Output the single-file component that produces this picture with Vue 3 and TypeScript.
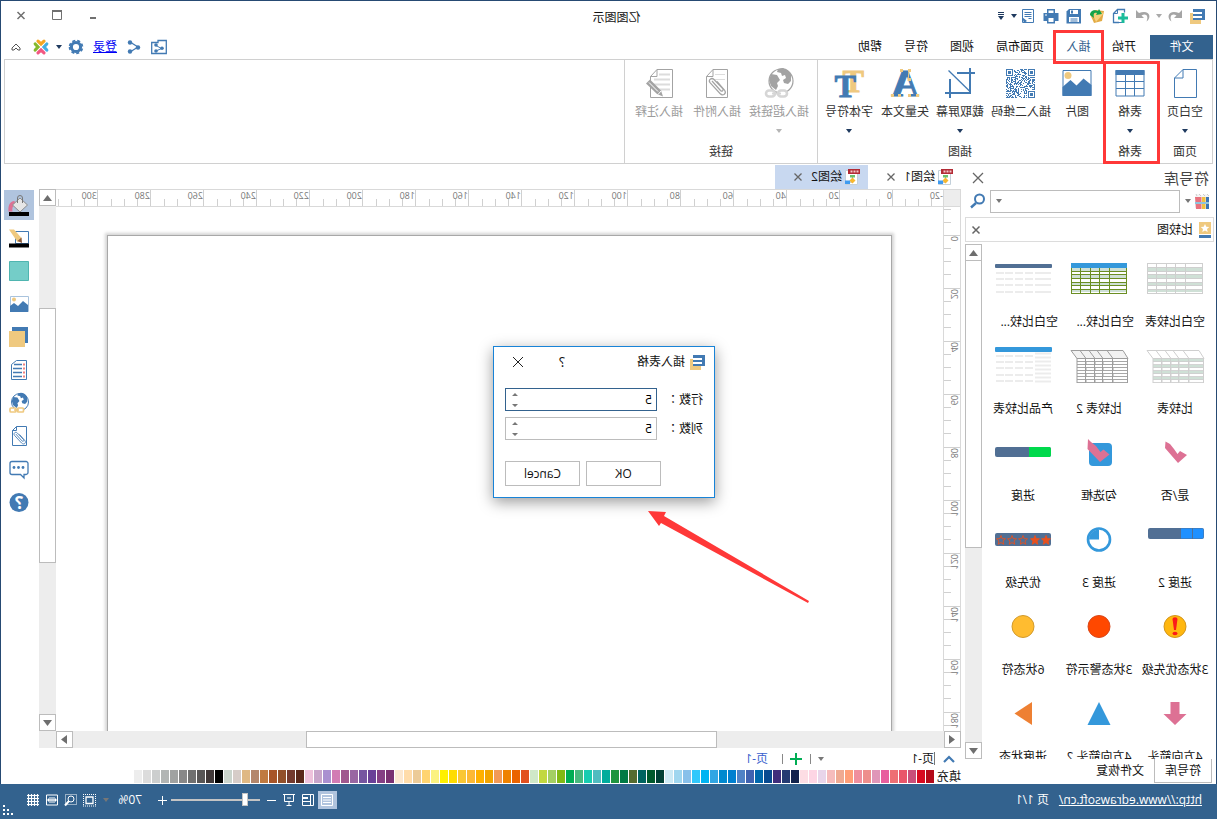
<script setup lang="ts">
import { ref } from 'vue'

const B = '#427ab3'
const O = '#efc97f'

const caret = '<path d="M0 0h6L3 4z"/>'

const art: Record<string, string> = {
  logo: `<path d="M5 12h8V5h3v11H5z" fill="${O}"/><path d="M1 1h12v3H4v2h9v2H4v2h9v2H1z" fill="${B}"/>`,
  undo: '<path d="M1 2v8h8L6.500 7.500C11 5 14 8 11.500 13.500 17.500 9 14 1 4 5z" fill="#a5a5a5"/>',
  redo: '<path d="M15 2v8H7l2.500-2.500C5 5 2 8 4.500 13.500-1.500 9 2 1 12 5z" fill="#a5a5a5"/>',
  add: `<path d="M7 14.500h7.500v-9l-4-4H5.500v4" fill="none" transform="translate(16 0) scale(-1 1)"/><path d="M9 14.500h5.500v-9l-4-4h-7v3" fill="none" stroke="${B}" stroke-width="1.300"/><path d="M10.500 1.500v4h4" fill="none" stroke="${B}"/><path d="M9.500 14.500H4" stroke="${B}"/>`,
  open: '<path d="M1 3l9-1 5 4-4 9-8-2z" fill="#e2ab45"/><path d="M1 5l9-2 3 2-4 9z" fill="#f8d07c"/><path d="M15 7c0-4-4-6-8-4L6 1 3 6l6 1-1-2c3-1 4 1 3 5z" fill="#16a34a"/>',
  save: `<path d="M1 1h12l2.500 2.500V15.500H1z" fill="${B}"/><path d="M4 2h8v4H4zM3 9h10v5H3z" fill="#fff"/><path d="M9 2.500h2v3H9zM4.500 10.500h7v1h-7zM4.500 12.500h7v1h-7z" fill="${B}"/>`,
  print: `<path d="M4 1h8v4h3.500v8H12v2.500H4V13H.5V5H4z" fill="${B}"/><path d="M5.500 2.500h5V5h-5zM5.500 10h5v4h-5z" fill="#fff"/><path d="M12 6.500h2v1h-2z" fill="#fff"/>`,
  preview: `<path d="M2.500 1.500h11v13h-11z" fill="none" stroke="${B}"/><path d="M4.500 4.500h7M4.500 6.500h7M4.500 8.500h7M4.500 10.500h3" stroke="${B}"/><path d="M14 9l-5 4 3 2z" fill="${B}"/>`,
  sharebox: `<path d="M.7 1.500v13h14.600v-11H9v-2z" fill="none" stroke="${B}" stroke-width="1.300"/><path d="M11 6.500L5.500 9.500 11 12" fill="none" stroke="${B}"/><g fill="${B}"><circle cx="11" cy="6" r="1.800"/><circle cx="5" cy="9.300" r="1.800"/><circle cx="11" cy="12" r="1.800"/></g>`,
  share: `<path d="M12 3L4 8l8 5" fill="none" stroke="${B}" stroke-width="1.300"/><g fill="${B}"><circle cx="12" cy="3.500" r="2.200"/><circle cx="4" cy="8.500" r="2.200"/><circle cx="12" cy="12.500" r="2.200"/></g>`,
  gear: `<circle cx="8" cy="8" r="4.600" fill="none" stroke="${B}" stroke-width="3"/><circle cx="8" cy="8" r="6.400" fill="none" stroke="${B}" stroke-width="1.800" stroke-dasharray="3 2.030"/>`,
  cross: '<g fill="none" stroke-width="3.200" stroke-linecap="round"><path d="M5 2.200L8 5l3-2.800" stroke="#f5a623"/><path d="M5 13.800L8 11l3 2.800" stroke="#f25882"/><path d="M2.200 5L5 8l-2.800 3" stroke="#45aee2"/><path d="M13.800 5L11 8l2.800 3" stroke="#84b92c"/></g><path d="M5.500 5.500l5 5M10.500 5.500l-5 5" stroke="#fff"/>',
  books: '<path d="M1 3l3-2 4 1 4-1 3 2v12H1z" fill="#f4f4f4"/><path d="M1 4h3v12H1z" fill="#3b74b4"/><path d="M4.500 4H8v12H4.500z" fill="#efc040"/><path d="M8.500 4H15l-1 12H8.500z" fill="#e8727e"/><path d="M1 3l2-2M5 3l2-2M9 3l2-2M13 3l1-2" stroke="#ccc"/><path d="M1 9h14v2H1z" fill="#8fc4dc"/>',
  search: `<circle cx="6.500" cy="6" r="4.500" fill="none" stroke="${B}" stroke-width="2"/><path d="M10 10l5 4.500" stroke="${B}" stroke-width="2.400"/>`,
  star: `<path d="M2 0h12v12H2z" fill="${O}"/><path d="M2 13h12v3H2z" fill="${B}"/><path d="M8 2l1.300 2.800 3 .3-2.300 2 .7 3L8 8.500 5.300 10l.7-3-2.300-2 3-.3z" fill="#fff"/>`,
  doc: '<path d="M2.500 1.500h12v14h-12z" fill="#fff" stroke="#c3d0da"/><path d="M0 0h12v5H0z" fill="#b22b35"/><path d="M1.500 2.500h9" stroke="#f2c8cb" stroke-width="2" stroke-dasharray="2 1"/><path d="M7.500 6v8M7.500 13h5" stroke="#999" fill="none"/><path d="M5 6h5v2.500H5z" fill="#6cc06c"/><path d="M7.500 8.500l3 3-3 3-3-3z" fill="#f8b82e"/><path d="M10 11.500h5V15h-5z" fill="#3f9bf0"/>',
}
art.add += '<path d="M3.500 6h3v3.500H10v3H6.500V16h-3v-3.500H0v-3h3.500z" fill="#1bbc9b" transform="translate(0 -1)"/>'

interface Tool { label: string; icon: string; size: number; drop?: boolean; off?: boolean }
interface Group { title: string; hot?: boolean; line?: boolean; tools: Tool[] }

function qr(): string {
  const n = 29
  let seed = 77
  let d = ''
  const corner = (x: number, y: number) => (x < 8 && y < 8) || (x > 20 && y < 8) || (x < 8 && y > 20)
  for (let y = 0; y < n; y++) {
    for (let x = 0; x < n; x++) {
      seed = (seed * 1103515245 + 12345) % 2147483648
      if (!corner(x, y) && seed / 2147483648 > 0.48) d += `M${x} ${y}h1v1h-1z`
    }
  }
  for (const [x, y] of [[0, 0], [22, 0], [0, 22]]) {
    d += `M${x} ${y}h7v7h-7zM${x + 1} ${y + 1}v5h5v-5zM${x + 2} ${y + 2}h3v3h-3z`
  }
  return `<path transform="translate(2 2)" d="${d}" fill="${B}"/>`
}

const clip = (c: string) =>
  `<path d="M21 14l-8.500 9.500c-1.500 1.500-3.500-.2-2.200-1.800L19 12.500c2.500-2.500 6 .5 4 3.200L13 26.500c-3 3-7 0-4.500-3.500L16 14.500" fill="none" stroke="${c}" stroke-width="1.200"/>`

const continents = (c: string) =>
  `<path d="M4 7c2-4 6-6 9-6l4 1 1 3-4 1-1 3-3-1-1 3 3 2-1 3-4 1-3-3zM18 8l6-1 2 6-2 6-5 4-2-4 1-3-3-3z" fill="${c}"/>`

const big: Record<string, string> = {
  page: `<path d="M4.500 2.500H18L26.500 11v19.500h-22zM18 2.500V11h8.500" fill="none" stroke="${B}"/>`,
  table: `<path d="M2 3.500h28v25.500H2z" fill="#fff" stroke="${B}"/><path d="M1.500 3h29v5h-29z" fill="${B}"/><path d="M2 14.500h28M2 21.500h28M11.500 8v21M20.500 8v21" stroke="${B}"/>`,
  image: `<path d="M2 3.500h28v25H2z" fill="none" stroke="${B}"/><circle cx="25" cy="8.500" r="3.500" fill="${O}"/><path d="M1.500 18l8-6.500 7 7 6-5.500 8 7v9h-29z" fill="${B}"/>`,
  qr: qr(),
  crop: `<path d="M27.500 3.500L6 24.500" stroke="${B}" stroke-width="1.300"/><path d="M26 12v19M31 26H5M19 6H1M6 1v25" stroke="${B}" stroke-width="2" fill="none"/>`,
  vector: `<text x="16" y="29" text-anchor="middle" font-family="Liberation Serif" font-weight="700" font-size="38" fill="${B}" stroke="${B}">A</text><path d="M12 4l1 10" stroke="${O}" fill="none"/><g fill="${O}"><path d="M10 2h3v3h-3zM18 2h3v3h-3zM10 11h3v3h-3zM2 27h3v3H2zM10 27h3v3h-3zM20 27h3v3h-3zM27 27h3v3h-3z"/></g>`,
  fonts: `<g font-family="Liberation Serif" font-weight="700" font-size="32"><text x="1" y="25" fill="${O}" stroke="${O}">T</text><text x="9" y="30" fill="${B}" stroke="${B}">T</text></g>`,
  link: `<circle cx="14" cy="14" r="12" fill="#fff" stroke="#a3a3a3" stroke-width="1.200"/>${continents('#a3a3a3')}<g fill="#fff" stroke="#d6d6d6" stroke-width="2.600"><rect x="8" y="23.500" width="9" height="6" rx="3"/><rect x="20" y="23.500" width="9" height="6" rx="3"/></g><path d="M14 26.500h9" stroke="#d6d6d6" stroke-width="2"/>`,
  attach: `<path d="M5.500 2.500H20l6.500 7v21h-21zM20 2.500v7h6.500" fill="#fff" stroke="#a3a3a3"/><path d="M8 7.500h10M8 12.500h16" stroke="#ddd"/>${clip('#a3a3a3')}`,
  note: `<path d="M2.500 2.500H18l6.500 7v21h-22zM18 2.500v7h6.500" fill="#fff" stroke="#a3a3a3"/><path d="M5 7.500h11M5 12.500h16M5 17.500h16M5 22.500h12" stroke="#dcdcdc" stroke-width="2"/><path d="M12 29.500l2-6L25 12.500l4 4-11 10.500z" fill="#a3a3a3"/><path d="M17 24.500l9-9M14 24l3 3.500" stroke="#fff"/>`,
}

const groups: Group[] = [
  { title: '页面', tools: [{ label: '空白页', icon: 'page', size: 54, drop: true }] },
  { title: '表格', hot: true, tools: [{ label: '表格', icon: 'table', size: 56, drop: true }] },
  {
    title: '插图', line: true, tools: [
      { label: '图片', icon: 'image', size: 50 },
      { label: '插入二维码', icon: 'qr', size: 62 },
      { label: '截取屏幕', icon: 'crop', size: 60, drop: true },
      { label: '矢量文本', icon: 'vector', size: 50 },
      { label: '字体符号', icon: 'fonts', size: 62, drop: true },
    ],
  },
  {
    title: '链接', line: true, tools: [
      { label: '插入超链接', icon: 'link', size: 76, drop: true, off: true },
      { label: '插入附件', icon: 'attach', size: 48, off: true },
      { label: '插入注释', icon: 'note', size: 68, off: true },
    ],
  },
]

const starPath = (x: number, fill: string) =>
  `<path transform="translate(${x} 22)" d="M0-4.500l1.200 3.100 3.300.2L2 1l.8 3.300L0 2.500l-2.800 1.800L-2 1l-2.500-2.200 3.300-.2z" fill="${fill}" stroke="#e8501e" stroke-width=".9"/>`

function sheet(line: string, fill: string, head: string): string {
  const top = head ? 10 : 6
  let s = `<path d="M2 6h56v31H2z" fill="#fff"/>`
  for (let i = 0; i < 4; i++) s += `<path d="M2 ${11 + i * 7}h56v3H2z" fill="${fill}"/>`
  for (const y of [6, 10, 14, 17, 21, 25, 28, 32, 36]) if (y >= top) s += `<path d="M2 ${y + 0.5}h56" stroke="${line}"/>`
  s += `<path d="M2.500 6v31M19.500 6v31M29.500 6v31M38.500 6v31M48.500 6v31M57.500 6v31" stroke="${line}"/>`
  return head ? s + `<path d="M2 6h56v5H2z" fill="${head}"/>` : s
}

function slanted(line: string, head: string, stripe: string): string {
  let s = `<path d="M6 6.500h52l-6 8H1z" fill="${head}" stroke="${line}"/>`
  for (const x of [16, 26, 34, 43]) s += `<path d="M${x} 14.500l6-8M${x} 14v24" stroke="${line}" fill="none"/>`
  for (let i = 0; i < 4; i++) s += `<path d="M1 ${15 + i * 6}h51v3H1z" fill="${stripe}"/>`
  for (let i = 0; i < 9; i++) s += `<path d="M1 ${14.5 + i * 3}h51" stroke="${line}" stroke-width=".9"/>`
  return s + `<path d="M1.500 14v25M16.500 14v25M26.500 14v25M34.500 14v25M43.500 14v25M52 14v25" stroke="${line}"/>`
}

function dashes(ys: number[], head: string, y: number, h: number, dense: boolean): string {
  let s = `<rect x="1" y="${y}" width="57" height="${h}" rx="1" fill="${head}"/>`
  for (const r of ys) s += `<path d="M20 ${r}h8M30 ${r}h8M40 ${r}h8M49 ${r}h8${dense ? '' : `M2 ${r}h16`}" stroke="#ececec" stroke-width="2"/>`
  if (dense) for (let i = 0; i < 8; i++) s += `<path d="M2 ${9.5 + i * 4}h16" stroke="#ececec" stroke-width="2"/>`
  return s
}

const symbols: { name: string; svg: string; cut?: boolean }[] = [
  { name: '空白比较表', svg: sheet('#cfcfcf', '#cfe0d6', '') },
  { name: '空白比较...', svg: sheet('#6b8e23', '#cfe0d6', '#3498db'), cut: true },
  { name: '空白比较...', svg: dashes([16, 22, 28, 35], '#516f94', 7, 4, false), cut: true },
  { name: '比较表', svg: slanted('#cfcfcf', '#fff', '#cfe0d6') },
  { name: '比较表 2', svg: slanted('#9d9d9d', '#f2f2f2', '#fff') },
  { name: '产品比较表', svg: dashes([12, 18, 24, 31, 37], '#3498db', 3, 5, true) },
  { name: '是/否', svg: '<path d="M39.500 10.500L35 13l-4 5-3.500 5-2.500-3-7 4 9 8 13-15z" fill="#dd7194"/>' },
  { name: '勾选框', svg: '<rect x="17" y="12" width="23" height="23" rx="4" fill="#3498db"/><path d="M41 8l-3 3-5 4-4.500 6-3-2.500-6 5L29 31l12.500-13z" fill="#dd7194"/>' },
  { name: '进度', svg: '<rect x="2" y="16" width="56" height="10" rx="2" fill="#516f94"/><path d="M3 16h21v10H3l-1-2v-6z" fill="#00d94c"/>' },
  { name: '进度 2', svg: '<rect x="1" y="10" width="56" height="11" rx="2" fill="#516f94"/><path d="M2 10.500h22v10H2l-.5-2v-6z" fill="#1e90ff"/><path d="M12.500 10v11" stroke="#516f94"/>' },
  { name: '进度 3', svg: '<circle cx="30" cy="21.500" r="11" fill="#fff" stroke="#3498db" stroke-width="2.600"/><path d="M30 21.500v-10a10 10 0 0 1 10 10z" fill="#3498db"/>' },
  { name: '优先级', svg: '<rect x="2" y="15" width="56" height="13" rx="2" fill="#516f94"/>' + starPath(7, '#e8501e') + starPath(18, '#e8501e') + starPath(30, 'none') + starPath(41, 'none') + starPath(52, 'none') },
  { name: '3状态优先级', svg: '<circle cx="30" cy="21.500" r="11" fill="#ffb70f" stroke="#d2951d"/><path d="M27.500 14a2.500 1.800 0 0 1 5 0L31 25h-2z" fill="#fb1a1a"/><ellipse cx="30" cy="28.500" rx="2.500" ry="1.700" fill="#fb1a1a"/>' },
  { name: '3状态警示符', svg: '<circle cx="30" cy="21.500" r="11" fill="#ff4800" stroke="#d9471a"/>' },
  { name: '6状态符', svg: '<circle cx="30" cy="21.500" r="11" fill="#ffbc30" stroke="#d19a2c"/>' },
  { name: '4方向箭头', svg: '<path d="M25.500 10h9v12h7L30 33 18.500 22h7z" fill="#dd7194"/>' },
  { name: '4方向箭头 2', svg: '<path d="M30 10l11.500 23h-23z" fill="#3498db"/>' },
  { name: '进度状态', svg: '<path d="M38.500 21.500L21 10v23z" fill="#ee8033"/>' },
]

const rail: { name: string; svg: string }[] = [
  { name: '填充', svg: '<path d="M21.500 17.500c.5-6-1-10-6-10.500l-1 4c3 1 3.500 3 3 6.500z" fill="#dd7194"/><path d="M10 4l7.500 7L10 18l-7.500-7z" fill="#e6e6e6" stroke="#8c8c8c"/><path d="M7.500 9V4a2.500 2.500 0 0 1 5 0v5" fill="none" stroke="#777"/><path d="M1 18h20v4H1z"/>' },
  { name: '线条', svg: `<path d="M1.500 4.500h13v12h-13z" fill="#fff" stroke="${B}"/><path d="M21 2.500h-5L8.500 11l1 3 3 1z" fill="${O}"/><path d="M8.500 10.500L8 16l4.500-2z" fill="#8b5a3c"/><path d="M1 16.500h20v4H1z"/>` },
  { name: '主题', svg: '<path d="M1.500 1.500h19v19h-19z" fill="#74cdc8" stroke="#4fb5b0"/>' },
  { name: '图片', svg: `<path d="M1.500 3.500h18v15h-18z" fill="#fff" stroke="#a9c3dd"/><circle cx="16" cy="6.500" r="2" fill="${O}"/><path d="M2 12l5-4 5 5 4-3 4 3v6H2z" fill="${B}"/>` },
  { name: '图层', svg: `<path d="M2 1h16v16H2z" fill="${B}"/><path d="M5 5h16v16H5z" fill="${O}"/>` },
  { name: '页面', svg: `<path d="M3.500 1.500h10l5 4v15h-15z" fill="#fff" stroke="${B}"/><path d="M8 5.500h8M8 9.500h9M8 13.500h9M8 17.500h9" stroke="${B}" stroke-width="1.700"/><path d="M5 5.500h2M5 9.500h2M5 13.500h2M5 17.500h2" stroke="#f08080" stroke-width="2"/>` },
  { name: '超链接', svg: `<circle cx="10" cy="10" r="8.500" fill="#fff" stroke="${B}"/><g transform="scale(.7)">${continents(B)}</g><g fill="#fff" stroke="${O}" stroke-width="1.700"><rect x="6.500" y="16" width="6" height="4" rx="1"/><rect x="14" y="16" width="6" height="4" rx="1"/></g><path d="M11 18h5" stroke="${O}" stroke-width="1.500"/>` },
  { name: '附件', svg: `<path d="M3.500 1.500h10l4 4v15h-14zM13.500 1.500v4h4" fill="#fff" stroke="${B}"/><g transform="translate(-1 -1) scale(.72)">${clip(B)}</g>` },
  { name: '注释', svg: `<path d="M4 3.500h14a2 2 0 0 1 2 2v9a2 2 0 0 1-2 2H9.500L6 20v-3.500H4a2 2 0 0 1-2-2v-9a2 2 0 0 1 2-2z" fill="#fff" stroke="${B}" stroke-width="1.300"/><g fill="${B}"><circle cx="7" cy="9.500" r="1.400"/><circle cx="11.500" cy="9.500" r="1.400"/><circle cx="16" cy="9.500" r="1.400"/></g>` },
  { name: '帮助', svg: `<circle cx="11" cy="11.500" r="9.500" fill="${B}"/><text x="11" y="17.500" text-anchor="middle" font-family="Open Sans" font-weight="700" font-size="17" fill="#fff">?</text>` },
]

const swatches = (
  'b40a19 d80a20 c94f7a e9556a ee6f74 e85f9e e096b8 ee8e8c f08f9e ff9f78 efaa92 f6bcbc e8d5ea fdd5e4 fddde4 ' +
  '12234c 253a72 402d7c 084a90 0068ac 4062b0 5082c6 0080d0 0089cf 30a6e4 00b4f2 30c8fc 88c0ea 9fd6ef cdeaf5 ' +
  '004035 00592c 006460 556b2f 007a44 20953f 00ac9c 50bcc0 18ccb0 48b97e 00ad54 82b914 a4cf62 c2d83f cfe8c8 ' +
  'e25020 eb6400 ef8200 f29a56 f2a400 ffb000 fdb935 fac734 ffdc00 fff000 fbf280 ffd470 eccb98 ffdcaa fce8d0 ' +
  '7a3172 853f84 6a4098 7655a0 9966a2 a0588e d27cb4 aa90d0 c8a5ca eec2dc ' +
  '5a281a 743a2e 92502a a85528 c07a40 b4876c dfb884 d6ccc8 cad4cc ' +
  '000000 403838 585656 707070 888888 a0a2a1 b2b5b4 cccece dcdcdc ededed'
).split(' ').map(c => '#' + c)

const hMarks = Array.from({ length: 16 }, (_, i) => i * 20)
const vMarks = Array.from({ length: 10 }, (_, i) => i * 20)

const menus = ['页面布局', '视图', '符号', '帮助']
const quick = ['add', 'open', 'save', 'print', 'preview']

const rows = ref(5)
const cols = ref(5)
const zoom = ref(15)
</script>

<template>
  <div class="window">
    <header class="titlebar">
      <div class="quick">
        <svg class="i16" viewBox="0 0 16 16" v-html="art.logo" />
        <button class="ib" aria-label="撤销"><svg class="i16" viewBox="0 0 16 16" v-html="art.undo" /></button>
        <svg class="caret pale" viewBox="0 0 6 4" v-html="caret" />
        <button class="ib" aria-label="重做"><svg class="i16" viewBox="0 0 16 16" v-html="art.redo" /></button>
        <button v-for="q in quick" :key="q" class="ib" :aria-label="q"><svg class="i16" viewBox="0 0 16 16" v-html="art[q]" /></button>
        <svg class="caret" viewBox="0 0 6 4" v-html="caret" />
        <svg class="more" viewBox="0 0 6 8"><path d="M0 0h6v1H0zM0 2h6v1H0zM0 4h6L3 8z" /></svg>
      </div>
      <h1 class="title">亿图图示</h1>
      <div class="winctl">
        <button class="ib" aria-label="最小化"><svg viewBox="0 0 12 12"><path d="M3 7h6v2H3z" fill="#707070" /></svg></button>
        <button class="ib" aria-label="最大化"><svg viewBox="0 0 12 12"><path d="M1.500 1.500h9v8h-9z" fill="none" stroke="#707070" /><path d="M1 0h10v2H1z" fill="#707070" /></svg></button>
        <button class="ib" aria-label="关闭"><svg viewBox="0 0 12 12"><path d="M2.500 2l7 7M9.500 2l-7 7" stroke="#707070" stroke-width="1.500" /></svg></button>
      </div>
    </header>

    <nav class="menubar">
      <button class="file">文件</button>
      <button class="menu start">开始</button>
      <button class="menu active">插入</button>
      <button v-for="m in menus" :key="m" class="menu">{{ m }}</button>
      <div class="account">
        <button class="ib" aria-label="共享文件夹"><svg class="i16" viewBox="0 0 16 16" v-html="art.sharebox" /></button>
        <button class="ib" aria-label="共享"><svg class="i16" viewBox="0 0 16 16" v-html="art.share" /></button>
        <a href="#" class="login">登录</a>
        <button class="ib" aria-label="设置"><svg class="i16" viewBox="0 0 16 16" v-html="art.gear" /></button>
        <svg class="caret" viewBox="0 0 6 4" v-html="caret" />
        <svg class="i16 cross" viewBox="0 0 16 16" v-html="art.cross" />
        <button class="ib" aria-label="折叠"><svg class="i12" viewBox="0 0 12 12"><path d="M2 7l4-4 4 4v2H8L6 7 4 9H2z" fill="none" stroke="#555" /></svg></button>
      </div>
    </nav>

    <section class="ribbon">
      <div v-for="g in groups" :key="g.title" class="group" :class="{ hot: g.hot, line: g.line }">
        <div class="tools">
          <button v-for="t in g.tools" :key="t.label" class="tool" :class="{ off: t.off }" :disabled="t.off" :style="{ width: t.size + 'px' }">
            <svg class="i32" viewBox="0 0 32 32" v-html="big[t.icon]" />
            <span>{{ t.label }}</span>
            <svg v-if="t.drop" class="caret" viewBox="0 0 6 4" v-html="caret" />
          </button>
        </div>
        <div class="gtitle">{{ g.title }}</div>
      </div>
    </section>

    <main class="main">
      <aside class="library">
        <div class="libhead">
          <h2>符号库</h2>
          <button class="ib" aria-label="关闭"><svg class="i12" viewBox="0 0 12 12"><path d="M1 1l10 10M11 1L1 11" stroke="#666" stroke-width="1.300" /></svg></button>
        </div>
        <div class="searchrow">
          <svg class="i16" viewBox="0 0 16 16" v-html="art.books" />
          <svg class="caret gray" viewBox="0 0 6 4" v-html="caret" />
          <div class="combo">
            <input type="text" aria-label="搜索">
            <svg class="caret gray" viewBox="0 0 6 4" v-html="caret" />
          </div>
          <button class="ib" aria-label="查找"><svg class="i16" viewBox="0 0 16 16" v-html="art.search" /></button>
        </div>
        <div class="cat">
          <svg class="i16" viewBox="0 0 16 16" v-html="art.star" />
          <span>比较图</span>
          <button class="ib" aria-label="关闭比较图"><svg class="i12" viewBox="0 0 12 12"><path d="M2.500 2.500l7 7M9.500 2.500l-7 7" stroke="#666" stroke-width="1.500" /></svg></button>
        </div>
        <div class="shelf">
          <div class="symbols">
            <figure v-for="(s, i) in symbols" :key="i">
              <svg viewBox="0 0 60 44" v-html="s.svg" />
              <figcaption :class="{ cut: s.cut }">{{ s.name }}</figcaption>
            </figure>
          </div>
          <div class="vbar">
            <button class="sb" aria-label="向上"><svg viewBox="0 0 9 6"><path d="M0 6h9L4.500 0z" /></svg></button>
            <div class="thumb lib" />
            <button class="sb end" aria-label="向下"><svg viewBox="0 0 9 6"><path d="M0 0h9L4.500 6z" /></svg></button>
          </div>
        </div>
        <div class="libtabs">
          <button class="on">符号库</button>
          <button>文件恢复</button>
        </div>
      </aside>

      <section class="center">
        <div class="doctabs">
          <div v-for="n in 2" :key="n" class="doctab" :class="{ on: n === 2 }">
            <svg class="i16" viewBox="0 0 16 16" v-html="art.doc" />
            <span>绘图{{ n }}</span>
            <button class="ib" aria-label="关闭"><svg class="i12" viewBox="0 0 12 12"><path d="M2.500 2.500l7 7M9.500 2.500l-7 7" stroke="#666" stroke-width="1.300" /></svg></button>
          </div>
        </div>
        <div class="work">
          <div class="cornerbox" />
          <div class="hruler">
            <span class="lead">-20</span>
            <span v-for="m in hMarks" :key="m" class="seg">{{ m }}</span>
          </div>
          <div class="vruler">
            <span class="lead" />
            <span v-for="m in vMarks" :key="m" class="seg"><span class="turned">{{ m }}</span></span>
          </div>
          <div class="canvas"><div class="sheet" /></div>
          <div class="vbar right">
            <button class="sb" aria-label="向上"><svg viewBox="0 0 9 6"><path d="M0 6h9L4.500 0z" /></svg></button>
            <div class="thumb draw" />
            <button class="sb end" aria-label="向下"><svg viewBox="0 0 9 6"><path d="M0 0h9L4.500 6z" /></svg></button>
          </div>
          <div class="hbar">
            <button class="sb" aria-label="向左"><svg class="side" viewBox="0 0 6 9"><path d="M6 0v9L0 4.500z" /></svg></button>
            <div class="hthumb" />
            <button class="sb end" aria-label="向右"><svg class="side" viewBox="0 0 6 9"><path d="M0 0v9l6-4.500z" /></svg></button>
          </div>
          <div class="pit" />
        </div>
        <div class="pages">
          <svg class="up" viewBox="0 0 12 8"><path d="M1 7l5-5 5 5" fill="none" stroke="#427ab3" stroke-width="2.200" /></svg>
          <button class="pagename">页-1</button>
          <svg class="caret gray" viewBox="0 0 6 4" v-html="caret" />
          <i class="bar" />
          <button class="ib" aria-label="新建页"><svg class="i12" viewBox="0 0 12 12"><path d="M0 6h12M6 0v12" stroke="#00ad54" stroke-width="2" /></svg></button>
          <i class="bar" />
          <button class="pagetab">页-1</button>
        </div>
        <div class="fill">
          <span>填充</span>
          <i v-for="(c, i) in swatches" :key="i" :style="{ background: c }" />
        </div>
      </section>

      <div class="rail">
        <button v-for="(r, i) in rail" :key="r.name" :class="{ on: i === 0 }" :aria-label="r.name">
          <svg viewBox="0 0 22 22" v-html="r.svg" />
        </button>
      </div>
    </main>

    <footer class="status">
      <a href="http://www.edrawsoft.cn/">http://www.edrawsoft.cn/</a>
      <span class="count">页 1/1</span>
      <div class="views">
        <button class="vb on" aria-label="普通视图"><svg viewBox="0 0 12 12"><path d="M.5.500h11v11H.5zM2 3.500h8M2 6h8M2 8.500h8" /></svg></button>
        <button class="vb" aria-label="页面视图"><svg viewBox="0 0 12 12"><path d="M.5.500h11v11H.5zM3.500.500v11M6 4.500h5M6 3.500h5M3.500 7.500h8" /></svg></button>
        <button class="vb" aria-label="演示"><svg viewBox="0 0 12 12"><path d="M0 .500h12M1.500.500v7h9v-7M6 8v4M3.500 11.500h5M4 4h4" /></svg></button>
      </div>
      <button class="sign" aria-label="缩小"><svg viewBox="0 0 9 9"><path d="M0 4.500h9" /></svg></button>
      <input v-model="zoom" type="range" min="0" max="100" aria-label="缩放">
      <button class="sign" aria-label="放大"><svg viewBox="0 0 9 9"><path d="M0 4.500h9M4.500 0v9" /></svg></button>
      <span class="pct">70%</span>
      <svg class="caret gray" viewBox="0 0 6 4" v-html="caret" />
      <div class="fits">
        <button class="vb" aria-label="选区"><svg viewBox="0 0 12 12"><path d="M0 .500h13M0 12h13M.5 0v12M12.500 0v12" stroke-dasharray="1 1" /><path d="M3 3h7v6.500H3z" stroke-width="1.300" /></svg></button>
        <button class="vb" aria-label="放大选区"><svg viewBox="0 0 12 12"><path d="M.5.500h11v10H.5z" stroke-dasharray="1 1" /><circle cx="6" cy="5" r="3" /><path d="M8 7l4 4.500" stroke-width="2" /></svg></button>
        <button class="vb" aria-label="适合宽度"><svg viewBox="0 0 12 12"><path d="M.5 1h11v10H.5zM0 6h12M4 3v6M8 3v6M6 3v6M2.500 4.500v3M9.500 4.500v3" /></svg></button>
        <button class="vb" aria-label="网格"><svg viewBox="0 0 12 12"><path d="M1.500 0v12M4.500 0v12M7.500 0v12M10.500 0v12M0 1.500h12M0 4.500h12M0 7.500h12M0 10.500h12" stroke-width="1.200" /></svg></button>
      </div>
      <svg class="grip" viewBox="0 0 10 10"><path d="M8 0h2v2H8zM8 4h2v2H8zM4 4h2v2H4zM8 8h2v2H8zM4 8h2v2H4zM0 8h2v2H0z" fill="#fff" /></svg>
    </footer>

    <form class="dialog" role="dialog" aria-labelledby="dlg" @submit.prevent>
      <div class="dhead">
        <svg class="i16" viewBox="0 0 16 16" v-html="art.logo" />
        <span id="dlg">插入表格</span>
        <button type="button" class="ib help">?</button>
        <button type="button" class="ib" aria-label="关闭"><svg class="i12" viewBox="0 0 12 12"><path d="M1 1l10 10M11 1L1 11" stroke="#222" /></svg></button>
      </div>
      <div class="field">
        <label for="rows">行数<span class="colon">：</span></label>
        <div class="spin focus">
          <input id="rows" v-model="rows" type="number">
          <svg viewBox="0 0 6 14"><path d="M0 3h6L3 0zM0 11h6L3 14z" /></svg>
        </div>
      </div>
      <div class="field">
        <label for="cols">列数<span class="colon">：</span></label>
        <div class="spin">
          <input id="cols" v-model="cols" type="number">
          <svg viewBox="0 0 6 14"><path d="M0 3h6L3 0zM0 11h6L3 14z" /></svg>
        </div>
      </div>
      <div class="dbtns">
        <button type="submit">OK</button>
        <button type="button">Cancel</button>
      </div>
    </form>

    <svg class="arrow" viewBox="0 0 162 94"><path d="M161 1l-18 1 2 4L0 91l1 2L148 13l2 3z" fill="#ff3838" /></svg>
  </div>
</template>

<style>
body {
  margin: 0;
  overflow: hidden;
}
</style>

<style scoped>
.window {
  position: relative;
  display: flex;
  flex-direction: column;
  box-sizing: border-box;
  width: 100%;
  height: 100vh;
  border: 1px solid #264a73;
  border-bottom: 0;
  background: #fff;
  color: #111;
  font: 12px/16px 'Open Sans', 'Noto Sans CJK SC', sans-serif;
  transform: scaleX(-1);
}
.window * {
  box-sizing: border-box;
}
button {
  margin: 0;
  padding: 0;
  border: 0;
  background: none;
  color: inherit;
  font: inherit;
  white-space: nowrap;
}
input {
  margin: 0;
  font: inherit;
}
svg {
  display: block;
  flex: none;
  overflow: visible;
}
.ib {
  display: flex;
  align-items: center;
  justify-content: center;
  flex: none;
}
.i12 {
  width: 12px;
  height: 12px;
}
.i16 {
  width: 16px;
  height: 16px;
}
.i32 {
  width: 32px;
  height: 32px;
}
.caret {
  width: 6px;
  height: 4px;
  fill: #1f3a5f;
}
.gray {
  fill: #777;
}
.pale {
  fill: #aaa;
}

.titlebar {
  display: grid;
  grid-template-columns: 1fr auto 1fr;
  align-items: center;
  height: 34px;
  padding: 0 14px 4px 10px;
}
.quick {
  display: flex;
  align-items: center;
  gap: 7px;
}
.quick .pale {
  margin: 0 -2px;
}
.quick .caret:not(.pale) {
  margin-left: -4px;
}
.more {
  width: 6px;
  height: 8px;
  fill: #1f3a5f;
}
.title {
  margin: 0;
  padding: 4px 12px 0 0;
  font-size: 12px;
  font-weight: 400;
}
.winctl {
  display: flex;
  justify-content: flex-end;
  gap: 24px;
}
.winctl svg {
  width: 12px;
  height: 12px;
}

.menubar {
  display: flex;
  height: 24px;
  padding: 0 9px 0 3px;
}
.file {
  width: 63px;
  background: #33628e;
  color: #fff;
}
.menu {
  padding: 0 11px;
}
.menu.start {
  padding: 0 8px 0 14px;
}
.menu.active {
  position: relative;
  width: 51px;
  margin-right: -2px;
  color: #33628e;
}
.menu.active::after {
  content: '';
  position: absolute;
  inset: -5px 0;
  border: 3px solid #ff3838;
}
.account {
  display: flex;
  align-items: center;
  gap: 9px;
  margin-left: auto;
}
.account .caret {
  margin: 0 -2px 0 -3px;
}
.account .cross {
  margin-right: 2px;
}
.login {
  color: #0000f5;
  text-decoration: underline;
}

.ribbon {
  display: flex;
  height: 105px;
  margin: 0 3px;
  border: 1px solid #d0d0d0;
}
.group {
  position: relative;
  display: flex;
  flex-direction: column;
}
.group.line {
  border-right: 1px solid #d0d0d0;
}
.group.hot::after {
  content: '';
  position: absolute;
  inset: 1px 1px -1px -2px;
  border: 3px solid #ff3838;
}
.tools {
  display: flex;
}
.tool {
  display: flex;
  flex-direction: column;
  align-items: center;
  height: 84px;
  padding-top: 7px;
  color: #333;
}
.tool span {
  margin-top: 5px;
}
.tool .caret {
  margin-top: 9px;
}
.tool.off {
  color: #9b9b9b;
}
.tool.off .caret {
  fill: #b5b5b5;
}
.gtitle {
  text-align: center;
  color: #333;
}

.main {
  display: flex;
  flex: 1;
  min-height: 0;
}
.library {
  display: flex;
  flex-direction: column;
  flex: none;
  width: 255px;
  padding: 0 4px 0 2px;
}
.libhead {
  display: flex;
  align-items: center;
  justify-content: space-between;
  height: 25px;
  padding: 3px 7px 0 5px;
}
.libhead h2 {
  margin: 0;
  color: #444;
  font-size: 15px;
  font-weight: 400;
}
.searchrow {
  display: flex;
  align-items: center;
  gap: 3px;
  height: 24px;
  padding: 0 5px 0 4px;
}
.combo {
  display: flex;
  align-items: center;
  flex: 1;
  height: 23px;
  margin: 0 1px 0 2px;
  padding-right: 5px;
  border: 1px solid #bcbcbc;
}
.combo input {
  flex: 1;
  min-width: 0;
  border: 0;
  outline: 0;
  background: none;
}
.cat {
  display: flex;
  align-items: center;
  height: 25px;
  margin-top: 4px;
  padding: 0 4px 0 0;
  border: 1px solid #dcdcdc;
}
.cat span {
  flex: 1;
  padding-left: 4px;
}
.shelf {
  display: flex;
  flex: 1;
  min-height: 0;
  margin-top: 2px;
}
.symbols {
  display: grid;
  flex: 1;
  grid-template-columns: repeat(3, 76px);
  grid-auto-rows: 87px;
  overflow: hidden;
  padding-left: 1px;
}
.symbols figure {
  display: flex;
  flex-direction: column;
  align-items: center;
  margin: 0;
  padding-top: 13px;
  white-space: nowrap;
}
.symbols svg {
  width: 60px;
  height: 44px;
}
figcaption {
  margin-top: 13px;
}
figcaption.cut {
  width: 70px;
}
.vbar {
  display: flex;
  flex-direction: column;
  flex: none;
  width: 17px;
  background: #ededed;
}
.sb {
  display: flex;
  align-items: center;
  justify-content: center;
  flex: none;
  width: 17px;
  height: 17px;
  border: 1px solid #bcbcbc;
  background: #fff;
  fill: #6e6e6e;
}
.sb svg {
  width: 9px;
  height: 6px;
}
.sb svg.side {
  width: 6px;
  height: 9px;
}
.vbar .end {
  margin-top: auto;
}
.hbar .end {
  margin-left: auto;
}
.thumb,
.hthumb {
  border: 1px solid #bcbcbc;
  background: #fff;
}
.thumb.lib {
  height: 56%;
  margin-top: -1px;
}
.libtabs {
  display: flex;
  height: 25px;
  padding: 0 0 1px 2px;
}
.libtabs button {
  padding: 0 10px;
}
.libtabs .on {
  border: 1px solid #bcbcbc;
  border-top: 0;
}

.center {
  display: flex;
  flex-direction: column;
  flex: 1;
  min-width: 0;
}
.doctabs {
  display: flex;
  height: 25px;
  padding-top: 1px;
}
.doctab {
  display: flex;
  align-items: center;
  gap: 2px;
  width: 93px;
  padding-left: 8px;
}
.doctab .ib {
  margin-left: 5px;
}
.doctab.on {
  background: #c8d8f0;
}
.work {
  display: grid;
  flex: 1;
  grid-template-columns: 18px 1fr 17px;
  grid-template-rows: 18px 1fr 17px;
  min-height: 0;
}
.cornerbox {
  border: 1px solid #d9d9d9;
  background: #ededed;
}
.hruler,
.vruler {
  display: flex;
  overflow: hidden;
  color: #777;
  font-size: 9px;
  line-height: 12px;
}
.hruler {
  border-top: 1px solid #d9d9d9;
  border-bottom: 1px solid #d9d9d9;
}
.hruler .seg,
.hruler .lead {
  flex: none;
  background: repeating-linear-gradient(90deg, #d0d0d0 0 1px, transparent 1px 13px) 12px 100% / 39px 7px no-repeat;
}
.hruler .seg {
  width: 53px;
  border-left: 1px solid #d0d0d0;
}
.hruler .lead {
  width: 50px;
  background-position-x: 11px;
}
.vruler {
  grid-column: 1;
  flex-direction: column;
  border-left: 1px solid #d9d9d9;
  border-right: 1px solid #d9d9d9;
}
.vruler .seg,
.vruler .lead {
  flex: none;
  background: repeating-linear-gradient(180deg, #d0d0d0 0 1px, transparent 1px 13px) 100% 12px / 7px 39px no-repeat;
}
.vruler .seg {
  display: flex;
  align-items: flex-start;
  height: 53px;
  border-top: 1px solid #d0d0d0;
}
.turned {
  writing-mode: vertical-rl;
  transform: rotate(180deg);
}
.vruler .lead {
  height: 28px;
  background-position-y: 2px;
  background-size: 7px 26px;
}
.canvas {
  display: flex;
  overflow: hidden;
  padding: 28px 51px 0;
}
.sheet {
  flex: 1;
  border: 1px solid #a8a8a8;
  border-bottom: 0;
  box-shadow: 0 0 3px 2px #d4d4d4;
}
.vbar.right {
  grid-column: 3;
  grid-row: 1 / 3;
}
.thumb.draw {
  height: 47%;
  margin-top: 102px;
}
.hbar {
  display: flex;
  grid-column: 1 / 3;
  background: #ededed;
}
.hthumb {
  width: 411px;
  margin-left: 227px;
}
.pit {
  background: #ededed;
}
.pages {
  display: flex;
  align-items: center;
  height: 21px;
  padding-left: 6px;
}
.up {
  width: 12px;
  height: 8px;
}
.pagename {
  width: 111px;
  margin-left: 8px;
  border-left: 1px solid #777;
  line-height: 13px;
  text-align: left;
}
.bar {
  width: 1px;
  height: 10px;
  margin: 0 8px 0 7px;
  background: #888;
}
.pagetab {
  margin-left: 6px;
  color: #3a5fcd;
}
.fill {
  display: flex;
  gap: 1px;
  height: 15px;
  padding-bottom: 1px;
}
.fill span {
  width: 26px;
}
.fill i {
  width: 8px;
  margin-top: 1px;
}

.rail {
  display: flex;
  flex-direction: column;
  flex: none;
  gap: 3px;
  padding: 26px 3px 0 5px;
}
.rail button {
  display: grid;
  place-items: center;
  width: 30px;
  height: 30px;
}
.rail .on {
  background: #b0c4de;
}
.rail svg {
  width: 22px;
  height: 22px;
}

.status {
  display: flex;
  align-items: center;
  height: 35px;
  margin: 0 -1px;
  padding: 0 3px 3px 15px;
  background: #33628e;
  color: #fff;
}
.status a {
  color: #fff;
}
.count {
  margin-left: 10px;
}
.views {
  display: flex;
  margin-left: auto;
}
.vb {
  display: grid;
  place-items: center;
  width: 19px;
  height: 18px;
}
.vb.on {
  background: #b0c4de;
}
.vb svg {
  width: 12px;
  height: 12px;
  fill: none;
  stroke: #fff;
}
.sign {
  margin: 0 7px 0 4px;
}
.sign svg {
  width: 9px;
  height: 9px;
  stroke: #fff;
}
.status input {
  width: 89px;
  height: 14px;
  margin: 0;
  background: none;
  appearance: none;
}
.status input::-webkit-slider-runnable-track {
  height: 2px;
  background: #c4c4c4;
}
.status input::-webkit-slider-thumb {
  width: 6px;
  height: 13px;
  margin-top: -6px;
  border: 1px solid #c4c4c4;
  background: #fff;
  appearance: none;
}
.pct {
  width: 33px;
  margin-left: 9px;
}
.fits {
  display: flex;
  margin: 0 11px 0 3px;
}
.grip {
  width: 10px;
  height: 10px;
  margin-top: 20px;
}

.dialog {
  position: absolute;
  top: 345px;
  left: 501px;
  width: 222px;
  padding: 0 11px 11px;
  border: 1px solid #1883d7;
  background: #fff;
  box-shadow: 0 4px 14px rgba(0, 0, 0, 0.4);
}
.dhead {
  display: flex;
  align-items: center;
  height: 29px;
  margin: 0 7px 12px -3px;
}
.dhead span {
  flex: 1;
  padding: 1px 0 0 5px;
}
.help {
  margin-right: 35px;
  font-size: 14px;
}
.colon {
  font-family: 'Noto Sans CJK TC', sans-serif;
}
.field {
  display: flex;
  align-items: center;
  justify-content: space-between;
  margin-bottom: 6px;
}
.spin {
  display: flex;
  align-items: center;
  width: 152px;
  height: 23px;
  padding: 0 6px 0 4px;
  border: 1px solid #bcbcbc;
}
.spin.focus {
  border-color: #33628e;
}
.spin input {
  flex: 1;
  min-width: 0;
  padding: 0;
  border: 0;
  outline: 0;
  appearance: textfield;
}
.spin svg {
  width: 6px;
  height: 14px;
  fill: #777;
}
.spin input::-webkit-inner-spin-button {
  display: none;
}
.dbtns {
  display: flex;
  gap: 6px;
  justify-content: flex-end;
  padding-top: 15px;
}
.dbtns button {
  width: 75px;
  height: 25px;
  border: 1px solid #bcbcbc;
}
.arrow {
  position: absolute;
  top: 509px;
  left: 407px;
  width: 162px;
  height: 94px;
}
</style>
